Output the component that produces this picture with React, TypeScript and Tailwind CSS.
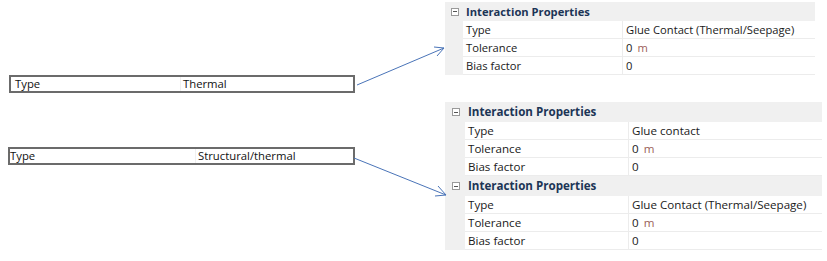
import React from 'react'

type Row = { label: string; value: string; unit?: string }

const glueThermal: Row[] = [
  { label: 'Type', value: 'Glue Contact (Thermal/Seepage)' },
  { label: 'Tolerance', value: '0', unit: 'm' },
  { label: 'Bias factor', value: '0' },
]

const glueContact: Row[] = [
  { label: 'Type', value: 'Glue contact' },
  { label: 'Tolerance', value: '0', unit: 'm' },
  { label: 'Bias factor', value: '0' },
]

function MinusBox() {
  return (
    <span className="flex h-[8px] w-[8px] items-center justify-center border border-[#9a9a9a] bg-white">
      <span className="block h-px w-[4px] bg-[#555]" />
    </span>
  )
}

// one collapsible "Interaction Properties" group
function Group({ rows, gutter, labelW, headH }: { rows: Row[]; gutter: string; labelW: string; headH: string }) {
  return (
    <div>
      <div className={`${headH} flex items-center`}>
        <div className={`${gutter} flex shrink-0 justify-center pl-[1px]`}>
          <MinusBox />
        </div>
        <span className="pl-[3px] font-bold text-[#1c3556]">Interaction Properties</span>
      </div>
      {rows.map(r => (
        <div key={r.label} className="flex h-[18px]">
          <div className={`${gutter} shrink-0`} />
          <div className="flex flex-1 border-b border-[#ececec] bg-white">
            <div className={`${labelW} flex shrink-0 items-center border-r border-[#ececec] pl-[3px] text-[#1a1a1a]`}>{r.label}</div>
            <div className="flex items-center pl-[3px] text-[#1a1a1a]">
              {r.value}
              {r.unit && <span className="ml-[5px] text-[#9c5f5a]">{r.unit}</span>}
            </div>
          </div>
        </div>
      ))}
    </div>
  )
}

export default function App() {
  return (
    <div className="relative flex h-[261px] w-[827px] bg-white leading-none" style={{ fontFamily: '"Open Sans", "Noto Sans", sans-serif' }}>
      {/* left: the old single-row property boxes */}
      <div className="w-[445px] shrink-0 text-[11.3px] text-[#111]">
        <div className="ml-[9px] mt-[75px] flex h-[18px] w-[346px] border-2 border-[#6b6b6b] bg-white">
          <div className="flex w-[170px] items-center border-r border-[#f0f0f0] pl-[4px]">Type</div>
          <div className="flex items-center pl-[2px]">Thermal</div>
        </div>
        <div className="ml-[8px] mt-[54px] flex h-[18px] w-[347px] border-2 border-[#6b6b6b] bg-white">
          <div className="flex w-[186px] items-center border-r border-[#f0f0f0]">Type</div>
          <div className="flex items-center pl-[2px]">Structural/thermal</div>
        </div>
      </div>

      {/* right: the new property grids */}
      <div className="flex flex-col">
        <div className="mt-[2px] w-[370px] bg-[#f0f0f0] text-[11.2px]">
          <Group rows={glueThermal} gutter="w-[18px]" labelW="w-[160px]" headH="h-[19px]" />
        </div>
        <div className="mt-[27px] w-[377px] bg-[#f0f0f0] text-[11.6px]">
          <Group rows={glueContact} gutter="w-[20px]" labelW="w-[164px]" headH="h-[20px]" />
          <Group rows={glueThermal} gutter="w-[20px]" labelW="w-[164px]" headH="h-[20px]" />
        </div>
      </div>

      {/* connector arrows */}
      <svg className="pointer-events-none absolute left-0 top-0" width="827" height="261">
        <g stroke="#4a74b8" strokeWidth="1" fill="none">
          <line x1="357" y1="85" x2="444" y2="48" />
          <polyline points="434,47 444,48 437,56" />
          <line x1="354" y1="158" x2="446" y2="195" />
          <polyline points="438,186 446,195 435,196" />
        </g>
      </svg>
    </div>
  )
}
